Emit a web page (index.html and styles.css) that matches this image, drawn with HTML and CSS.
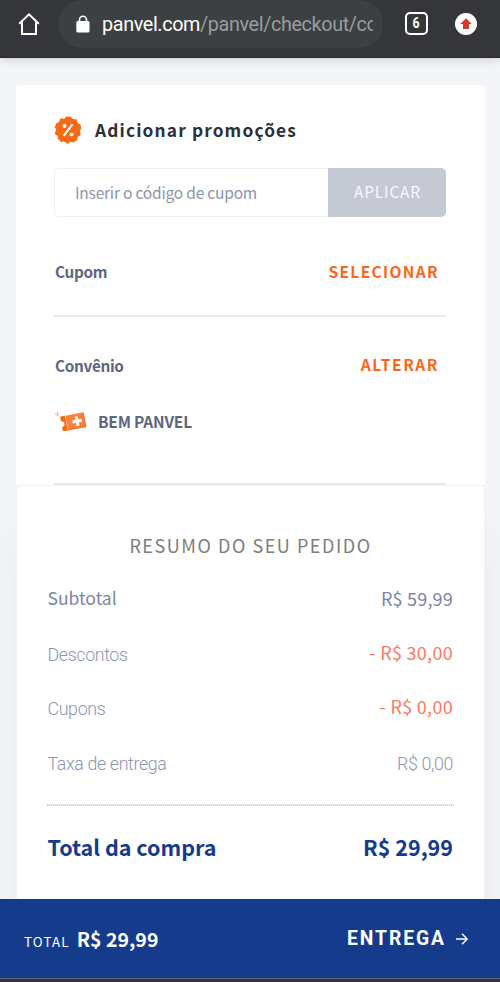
FILE: index.html
```html
<!DOCTYPE html>
<html lang="pt-BR">
<head>
<meta charset="utf-8">
<title>Panvel - Checkout</title>
<link rel="stylesheet" href="styles.css">
</head>
<body>
<header class="browser-bar">
  <svg class="home" width="24" height="24" viewBox="0 0 24 24"><path d="M2.2 11.8 12 2.3l9.8 9.5M5 10v12h14V10" fill="none" stroke="#fff" stroke-width="2"/></svg>
  <div class="omnibox">
    <svg class="lock" width="14" height="18" viewBox="0 0 14 18"><path d="M3.5 7V4.8a3.5 3.5 0 0 1 7 0V7" fill="none" stroke="#fff" stroke-width="1.6"/><rect x=".3" y="6" width="13.2" height="11.6" rx="1.5" fill="#fff"/></svg>
    <div class="url">panvel.com<span class="path">/panvel/checkout/co</span></div>
  </div>
  <div class="tabs"><span>6</span></div>
  <svg class="update" width="22" height="22" viewBox="0 0 22 22"><circle cx="11" cy="11" r="11" fill="#fff"/><path d="M11 5.3 16.8 11H14v5H8v-5H5.2z" fill="#d93a2b"/></svg>
</header>

<main class="page">
  <section class="promo">
    <h2 class="promo-title">
      <svg width="28" height="28" viewBox="-14 -14 28 28">
        <g fill="#f86a13"><circle r="12.2"/>
          <g id="teeth"><circle cx="1.8" cy="-11.4" r="2"/><circle cx="7.2" cy="-9" r="2"/><circle cx="10.9" cy="-4.2" r="2"/></g>
          <use href="#teeth" transform="rotate(72)"/><use href="#teeth" transform="rotate(144)"/><use href="#teeth" transform="rotate(216)"/><use href="#teeth" transform="rotate(288)"/>
        </g>
        <path d="M4-5.2-3.8 5.2" stroke="#fff" stroke-width="2.1" stroke-linecap="round"/>
        <circle cx="-3.5" cy="-4" r="1.9" fill="#fff"/><circle cx="3.7" cy="4.3" r="1.9" fill="#fff"/>
      </svg>
      <span>Adicionar promoções</span>
    </h2>
    <div class="coupon-form">
      <div class="coupon-input">Inserir o código de cupom</div>
      <div class="apply">APLICAR</div>
    </div>
    <div class="row row-coupon"><span class="label">Cupom</span><span class="action select">SELECIONAR</span></div>
    <div class="row row-deal"><span class="label">Convênio</span><span class="action change">ALTERAR</span></div>
    <div class="deal">
      <svg width="32" height="20" viewBox="0 0 32 20">
        <g transform="rotate(-11 18 11)">
          <path d="M6.5 3.5H30V18.2H6.5V14a2.8 2.8 0 0 0 0-6z" fill="#fb8040"/>
          <path d="M6.5 3.5H11v14.7H6.5V14a2.8 2.8 0 0 0 0-6z" fill="#f8690f"/>
          <path d="M11.5 4v14" stroke="#ffe1d0" stroke-dasharray="1.2 1.2"/>
          <path d="M22.2 6.2v9.4M17.5 10.9h9.4" stroke="#fff" stroke-width="3"/>
          <path d="M11 18h18.8V4" stroke="#f8690f" stroke-width=".8" fill="none"/>
        </g>
        <path d="M2.5.8v1.4m0 1.6v1.4M.3 3h1.4m1.6 0h1.4" stroke="#fa8a52" stroke-width="1.2"/>
      </svg>
      <span>BEM PANVEL</span>
    </div>
  </section>

  <section class="summary">
    <h2 class="summary-title">RESUMO DO SEU PEDIDO</h2>
    <div class="line subtotal"><span>Subtotal</span><span class="amount">R$ 59,99</span></div>
    <div class="line"><span>Descontos</span><span class="discount">- R$ 30,00</span></div>
    <div class="line"><span>Cupons</span><span class="discount">- R$ 0,00</span></div>
    <div class="line"><span>Taxa de entrega</span><span>R$ 0,00</span></div>
    <div class="divider"></div>
    <div class="line total"><span>Total da compra</span><span>R$ 29,99</span></div>
  </section>
</main>

<footer class="checkout-bar">
  <div class="bar-total"><span class="caption">TOTAL</span><span class="value">R$ 29,99</span></div>
  <div class="next"><span>ENTREGA</span>
    <svg width="12" height="12" viewBox="0 0 12 12"><path d="M0 6h11M6 .8 11.2 6 6 11.2" fill="none" stroke="#fff" stroke-width="1.4"/></svg>
  </div>
</footer>
<div class="system-edge"></div>
</body>
</html>
```
FILE: styles.css
```css
* { box-sizing: border-box; }
body {
  margin: 0;
  width: 500px;
  height: 982px;
  display: flex;
  flex-direction: column;
  overflow: hidden;
  background: #f4f5f8;
  font-family: "Noto Sans CJK JP", "Noto Sans", sans-serif;
}
h2 { margin: 0; }
svg { display: block; flex: none; }

.browser-bar {
  flex: none;
  height: 58px;
  padding: 0 23px 10px 17px;
  display: flex;
  align-items: center;
  background: #35363a;
  border-bottom: 1px solid #29282c;
  box-shadow: 0 1px 10px rgba(0, 0, 0, .18);
  position: relative;
  font-family: Roboto, sans-serif;
}
.omnibox {
  width: 325px;
  height: 48px;
  margin-left: 17px;
  padding: 0 10px 0 18px;
  display: flex;
  align-items: center;
  border-radius: 24px;
  background: #3c4043;
}
.url {
  width: 272px;
  margin-left: 12px;
  padding-top: 3px;
  overflow: hidden;
  white-space: nowrap;
  font-size: 19.8px;
  letter-spacing: -.37px;
  line-height: 26px;
  color: #fff;
}
.path { color: #9a9c9e; }
.tabs {
  width: 23px;
  height: 23px;
  margin-left: 22px;
  border: 2px solid #fff;
  border-radius: 5px;
  color: #fff;
  font-size: 14px;
  font-weight: 700;
  line-height: 19px;
  text-align: center;
}
.tabs span { display: inline-block; transform: scaleX(.88); }
.update { margin-left: auto; }

.page {
  flex: 1;
  min-height: 0;
  padding: 27px 15px 0 16px;
  display: flex;
  flex-direction: column;
}
.promo {
  flex: none;
  height: 400px;
  padding: 30px 39px 0 38px;
  background: #fff;
  border-radius: 4px 4px 0 0;
}
.promo-title {
  display: flex;
  align-items: center;
  gap: 13px;
  height: 29px;
  font-size: 17.3px;
  line-height: 28px;
  letter-spacing: 1.15px;
  color: #2b303c;
}
.coupon-form {
  height: 49px;
  margin-top: 24px;
  display: flex;
  line-height: 47px;
}
.coupon-input {
  flex: 1;
  padding-left: 20px;
  border: 1px solid #eeeff2;
  border-right: 0;
  border-radius: 5px 0 0 5px;
  color: #8b94ac;
  font-size: 15.5px;
  letter-spacing: -.2px;
  line-height: 46px;
}
.apply {
  width: 118px;
  padding-left: 1px;
  border-radius: 0 5px 5px 0;
  background: #c5c9d3;
  color: #f9fafc;
  font-size: 15.3px;
  letter-spacing: .9px;
  text-align: center;
}
.row {
  display: flex;
  justify-content: space-between;
  padding: 0 7px 0 1px;
  line-height: 28px;
}
.row-coupon {
  height: 100px;
  padding-top: 40px;
  border-bottom: 2px solid #e9e9ea;
}
.row-deal { padding-top: 34px; }
.label { font-size: 15.3px; font-weight: 700; letter-spacing: -.3px; color: #5c667e; }
.action { font-size: 15.5px; font-weight: 700; color: #fb6514; }
.select { letter-spacing: 1.35px; }
.change { letter-spacing: 1.6px; line-height: 27px; }
.deal {
  height: 106px;
  padding: 29px 0 49px 1px;
  display: flex;
  align-items: center;
  gap: 11px;
  border-bottom: 2px solid #e9e9ea;
  color: #5c667e;
  font-size: 15.5px;
  font-weight: 700;
  letter-spacing: -.2px;
}

.summary {
  flex: 1;
  min-height: 0;
  padding: 43px 30px 0;
  background: #fff;
  border: 1px solid #f1f1f3;
  border-bottom: 0;
  border-radius: 5px 5px 0 0;
  box-shadow: 0 50px 40px rgba(60, 65, 75, .06);
}
.summary-title {
  height: 34px;
  color: #7d7d7d;
  font-size: 18px;
  font-weight: 400;
  line-height: 32px;
  letter-spacing: 1.55px;
  text-align: center;
}
.line {
  height: 54.5px;
  padding: 3px 1px 0 .5px;
  display: flex;
  justify-content: space-between;
  align-items: center;
  color: #8d94b5;
  font: 300 17.8px Roboto, sans-serif;
  letter-spacing: -.35px;
}
.subtotal, .discount, .total {
  font-family: "Noto Sans CJK JP", "Noto Sans", sans-serif;
  line-height: 28px;
  letter-spacing: 0;
}
.subtotal { margin-top: 8px; padding-top: 0; font-size: 17.5px; font-weight: 400; color: #7b83a9; }
.amount { font-size: 18px; letter-spacing: .2px; }
.discount { padding-bottom: 5px; font-size: 18px; font-weight: 400; letter-spacing: .3px; color: #ff7761; }
.divider {
  height: 2px;
  margin-top: 15px;
  background: repeating-linear-gradient(90deg, #d2d2d2 0 1px, #f0f0f0 1px 2px);
}
.total {
  height: 82px;
  padding: 0 1px 0 .5px;
  color: #143b8c;
  font-size: 21.5px;
  font-weight: 700;
}

.checkout-bar {
  flex: none;
  height: 79px;
  padding: 0 32px 0 24px;
  display: flex;
  justify-content: space-between;
  align-items: center;
  background: #143b8c;
  color: #fff;
}
.bar-total { display: flex; align-items: baseline; gap: 7px; }
.caption { font-size: 13.3px; letter-spacing: 1.2px; }
.value { font-size: 19.5px; font-weight: 700; }
.next {
  display: flex;
  align-items: center;
  gap: 10px;
  font: 700 19.3px Roboto, sans-serif;
  letter-spacing: 1.95px;
}
.system-edge { flex: none; height: 4px; background: #353539; border-top: 1px solid #65666a; }
```
